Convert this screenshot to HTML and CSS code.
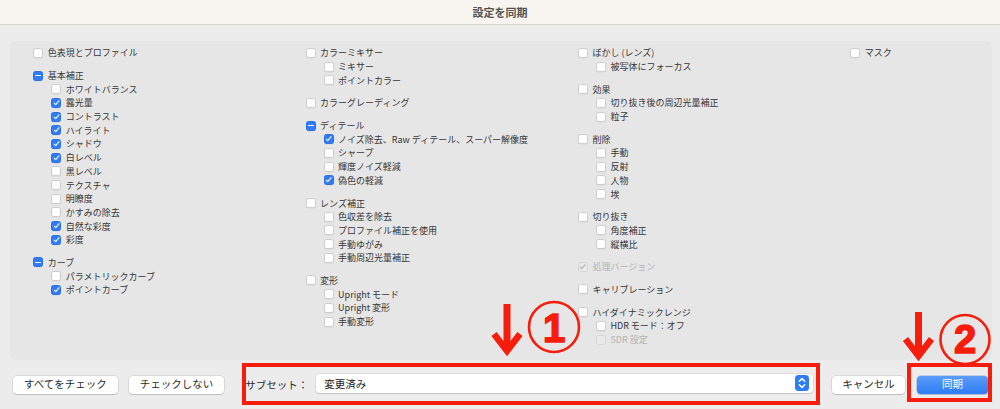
FILE: index.html
```html
<!DOCTYPE html>
<html lang="ja">
<head>
<meta charset="utf-8">
<title>設定を同期</title>
<link rel="stylesheet" href="styles.css">
</head>
<body>
<div class="titlebar">設定を同期</div>

<div class="panel">
  <div class="col">
    <div class="group">
      <div class="item"><span class="cb"></span>色表現とプロファイル</div>
    </div>
    <div class="group">
      <div class="item"><span class="cb mixed"></span>基本補正</div>
      <div class="item sub"><span class="cb"></span>ホワイトバランス</div>
      <div class="item sub"><span class="cb on"></span>露光量</div>
      <div class="item sub"><span class="cb on"></span>コントラスト</div>
      <div class="item sub"><span class="cb on"></span>ハイライト</div>
      <div class="item sub"><span class="cb on"></span>シャドウ</div>
      <div class="item sub"><span class="cb on"></span>白レベル</div>
      <div class="item sub"><span class="cb"></span>黒レベル</div>
      <div class="item sub"><span class="cb"></span>テクスチャ</div>
      <div class="item sub"><span class="cb"></span>明瞭度</div>
      <div class="item sub"><span class="cb"></span>かすみの除去</div>
      <div class="item sub"><span class="cb on"></span>自然な彩度</div>
      <div class="item sub"><span class="cb on"></span>彩度</div>
    </div>
    <div class="group">
      <div class="item"><span class="cb mixed"></span>カーブ</div>
      <div class="item sub"><span class="cb"></span>パラメトリックカーブ</div>
      <div class="item sub"><span class="cb on"></span>ポイントカーブ</div>
    </div>
  </div>

  <div class="col">
    <div class="group">
      <div class="item"><span class="cb"></span>カラーミキサー</div>
      <div class="item sub"><span class="cb"></span>ミキサー</div>
      <div class="item sub"><span class="cb"></span>ポイントカラー</div>
    </div>
    <div class="group">
      <div class="item"><span class="cb"></span>カラーグレーディング</div>
    </div>
    <div class="group">
      <div class="item"><span class="cb mixed"></span>ディテール</div>
      <div class="item sub"><span class="cb on"></span>ノイズ除去、Raw ディテール、スーパー解像度</div>
      <div class="item sub"><span class="cb"></span>シャープ</div>
      <div class="item sub"><span class="cb"></span>輝度ノイズ軽減</div>
      <div class="item sub"><span class="cb on"></span>偽色の軽減</div>
    </div>
    <div class="group">
      <div class="item"><span class="cb"></span>レンズ補正</div>
      <div class="item sub"><span class="cb"></span>色収差を除去</div>
      <div class="item sub"><span class="cb"></span>プロファイル補正を使用</div>
      <div class="item sub"><span class="cb"></span>手動ゆがみ</div>
      <div class="item sub"><span class="cb"></span>手動周辺光量補正</div>
    </div>
    <div class="group">
      <div class="item"><span class="cb"></span>変形</div>
      <div class="item sub"><span class="cb"></span>Upright モード</div>
      <div class="item sub"><span class="cb"></span>Upright 変形</div>
      <div class="item sub"><span class="cb"></span>手動変形</div>
    </div>
  </div>

  <div class="col">
    <div class="group">
      <div class="item"><span class="cb"></span>ぼかし (レンズ)</div>
      <div class="item sub"><span class="cb"></span>被写体にフォーカス</div>
    </div>
    <div class="group">
      <div class="item"><span class="cb"></span>効果</div>
      <div class="item sub"><span class="cb"></span>切り抜き後の周辺光量補正</div>
      <div class="item sub"><span class="cb"></span>粒子</div>
    </div>
    <div class="group">
      <div class="item"><span class="cb"></span>削除</div>
      <div class="item sub"><span class="cb"></span>手動</div>
      <div class="item sub"><span class="cb"></span>反射</div>
      <div class="item sub"><span class="cb"></span>人物</div>
      <div class="item sub"><span class="cb"></span>埃</div>
    </div>
    <div class="group">
      <div class="item"><span class="cb"></span>切り抜き</div>
      <div class="item sub"><span class="cb"></span>角度補正</div>
      <div class="item sub"><span class="cb"></span>縦横比</div>
    </div>
    <div class="group">
      <div class="item dis"><span class="cb on dis"></span>処理バージョン</div>
    </div>
    <div class="group">
      <div class="item"><span class="cb"></span>キャリブレーション</div>
    </div>
    <div class="group">
      <div class="item"><span class="cb"></span>ハイダイナミックレンジ</div>
      <div class="item sub"><span class="cb"></span>HDR モード：オフ</div>
      <div class="item sub dis"><span class="cb dis"></span>SDR 設定</div>
    </div>
  </div>

  <div class="col">
    <div class="group">
      <div class="item"><span class="cb"></span>マスク</div>
    </div>
  </div>
</div>

<div class="footer">
  <div class="btn">すべてをチェック</div>
  <div class="btn btn-gap">チェックしない</div>
  <div class="subset-label">サブセット：</div>
  <div class="select">
    <span>変更済み</span>
    <svg class="stepper" width="14" height="16" viewBox="0 0 14 16">
      <rect x="0" y="0" width="14" height="16" rx="3.5" fill="#2f7cf6"/>
      <polyline points="4.3,6.3 7,3.6 9.7,6.3" fill="none" stroke="#fff" stroke-width="1.5" stroke-linecap="round" stroke-linejoin="round"/>
      <polyline points="4.3,9.7 7,12.4 9.7,9.7" fill="none" stroke="#fff" stroke-width="1.5" stroke-linecap="round" stroke-linejoin="round"/>
    </svg>
  </div>
  <div class="btn cancel">キャンセル</div>
  <div class="btn primary">同期</div>
</div>

<svg class="annot" width="1000" height="409" viewBox="0 0 1000 409">
  <rect x="244" y="365" width="574" height="38" fill="none" stroke="#f71d0c" stroke-width="4"/>
  <rect x="909" y="365" width="81" height="35" fill="none" stroke="#f71d0c" stroke-width="4"/>

  <line x1="507" y1="304" x2="507" y2="350" stroke="#f71d0c" stroke-width="7"/>
  <polyline points="494,334 507,351 520,334" fill="none" stroke="#f71d0c" stroke-width="6.5"/>
  <circle cx="554" cy="327" r="25" fill="none" stroke="#f71d0c" stroke-width="2.6"/>
  <text class="num" x="554" y="342" text-anchor="middle">1</text>

  <line x1="918.5" y1="312" x2="918.5" y2="355" stroke="#f71d0c" stroke-width="7"/>
  <polyline points="905.5,339 918.5,356 931.5,339" fill="none" stroke="#f71d0c" stroke-width="6.5"/>
  <circle cx="965" cy="339.5" r="24.5" fill="none" stroke="#f71d0c" stroke-width="2.6"/>
  <text class="num" x="965" y="353" text-anchor="middle">2</text>
</svg>
</body>
</html>
```

FILE: styles.css
```css
html, body {
  margin: 0;
  padding: 0;
}

body {
  width: 1000px;
  height: 409px;
  overflow: hidden;
  position: relative;
  background: #ececec;
  font-family: "Noto Sans CJK JP", "Noto Sans", sans-serif;
  color: #3a3a3a;
}

.titlebar {
  height: 24px;
  background: #f8f5f1;
  border-bottom: 1px solid #d9d6d2;
  display: flex;
  align-items: center;
  justify-content: center;
  font-size: 11px;
  font-weight: 700;
  color: #515151;
}

.panel {
  margin: 16px 8px 0 10px;
  height: 319px;
  box-sizing: border-box;
  background: #e6e6e6;
  border-radius: 6px;
  padding: 5px 0 0 23.3px;
  display: grid;
  grid-template-columns: 272.3px 272.3px 272.3px minmax(0, 1fr);
  align-content: start;
}

.group {
  margin-bottom: 9px;
}

.item {
  display: flex;
  align-items: center;
  height: 13.7px;
  font-size: 9px;
  line-height: 1;
  color: #363636;
  white-space: nowrap;
}

.item.sub {
  padding-left: 18px;
}

.item.dis {
  color: #b4b4b4;
}

.cb {
  flex: none;
  width: 10px;
  height: 10px;
  box-sizing: border-box;
  margin-right: 4.5px;
  border-radius: 2.5px;
  background: #fff;
  border: 0.5px solid #cdcdcd;
  box-shadow: 0 0.5px 0.5px rgba(0, 0, 0, 0.08);
  display: flex;
  align-items: center;
  justify-content: center;
}

.cb.on,
.cb.mixed {
  background: #2f7cf6;
  border-color: #2a71e4;
}

.cb.on::after {
  content: "";
  width: 2.4px;
  height: 5.4px;
  border: solid #fff;
  border-width: 0 1.6px 1.6px 0;
  transform: rotate(42deg);
  margin-top: -1.4px;
}

.cb.mixed::after {
  content: "";
  width: 6px;
  height: 1.7px;
  border-radius: 1px;
  background: #fff;
}

.cb.dis {
  background: #e9e9e9;
  border-color: #d6d6d6;
  box-shadow: none;
}

.cb.dis.on::after {
  border-color: #b0b0b0;
}

.footer {
  height: 49px;
  display: flex;
  align-items: center;
  padding: 0 12px 0 13px;
  box-sizing: border-box;
}

.btn {
  height: 18px;
  padding: 0 11px;
  box-sizing: border-box;
  background: #fff;
  border-radius: 4px;
  box-shadow: 0 0 0 0.5px rgba(0, 0, 0, 0.16), 0 1px 1px rgba(0, 0, 0, 0.12);
  font-size: 10.5px;
  line-height: 1;
  color: #2b2b2b;
  display: flex;
  align-items: center;
  justify-content: center;
  white-space: nowrap;
}

.btn-gap {
  margin-left: 11px;
}

.subset-label {
  margin-left: 21px;
  margin-right: 8px;
  font-size: 10.5px;
  color: #2b2b2b;
  white-space: nowrap;
}

.select {
  flex: 1;
  min-width: 0;
  height: 19px;
  margin-top: -3px;
  box-sizing: border-box;
  background: #fff;
  border-radius: 4px;
  box-shadow: 0 0 0 0.5px rgba(0, 0, 0, 0.14), 0 1px 1px rgba(0, 0, 0, 0.1);
  display: flex;
  align-items: center;
  justify-content: space-between;
  padding: 0 4px 0 8px;
  font-size: 10.5px;
  color: #222;
}

.stepper {
  display: block;
}

.cancel {
  margin-left: 19px;
  width: 73px;
  padding: 0;
}

.primary {
  margin-left: 12px;
  width: 71px;
  padding: 0;
  background: linear-gradient(#5b9df9, #2c7cf4);
  box-shadow: 0 0 0 0.5px rgba(30, 90, 200, 0.4), 0 1px 1px rgba(0, 0, 0, 0.12);
  color: #fff;
}

.annot {
  position: absolute;
  top: 0;
  left: 0;
  pointer-events: none;
}

.num {
  font-family: "Liberation Sans", Arial, sans-serif;
  font-weight: 700;
  font-size: 40px;
  fill: #f71d0c;
  stroke: #f71d0c;
  stroke-width: 1.6;
}
```
